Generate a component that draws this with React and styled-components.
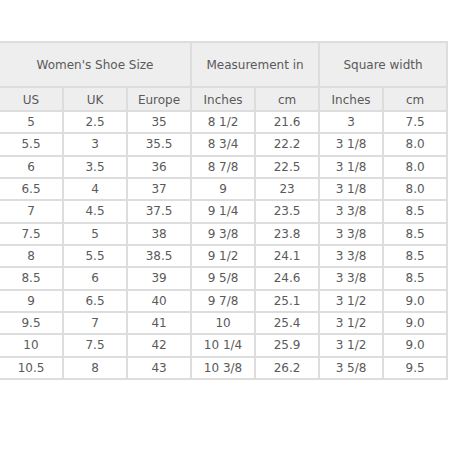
import React from "react";
import styled, { createGlobalStyle } from "styled-components";

const Global = createGlobalStyle`
  html, body { margin: 0; padding: 0; background: #fff; }
  body { font-family: "DejaVu Sans", Verdana, sans-serif; overflow: hidden; }
`;

const Page = styled.div`
  width: 449px;
  height: 450px;
  overflow: hidden;
  padding-top: 41px;
  box-sizing: border-box;
`;

const Table = styled.table`
  margin-left: -2px;
  width: 450px;
  table-layout: fixed;
  border-collapse: collapse;
  font-size: 12px;
  color: #5a5a5a;
`;

const Col = styled.col`
  width: 64px;
`;

const GroupHead = styled.th`
  background: #eee;
  border: 2px solid #ddd;
  font-weight: normal;
  height: 42px;
  padding: 1px 0 0;
  text-align: center;
`;

const SubHead = styled.th`
  background: #eee;
  border: 2px solid #ddd;
  font-weight: normal;
  height: 21px;
  padding: 1px 0 0;
  text-align: center;
`;

const Cell = styled.td`
  border: 2px solid #ddd;
  height: 20.33px;
  padding: 0;
  text-align: center;
  background: #fff;
`;

const rows = [
  ["5", "2.5", "35", "8 1/2", "21.6", "3", "7.5"],
  ["5.5", "3", "35.5", "8 3/4", "22.2", "3 1/8", "8.0"],
  ["6", "3.5", "36", "8 7/8", "22.5", "3 1/8", "8.0"],
  ["6.5", "4", "37", "9", "23", "3 1/8", "8.0"],
  ["7", "4.5", "37.5", "9 1/4", "23.5", "3 3/8", "8.5"],
  ["7.5", "5", "38", "9 3/8", "23.8", "3 3/8", "8.5"],
  ["8", "5.5", "38.5", "9 1/2", "24.1", "3 3/8", "8.5"],
  ["8.5", "6", "39", "9 5/8", "24.6", "3 3/8", "8.5"],
  ["9", "6.5", "40", "9 7/8", "25.1", "3 1/2", "9.0"],
  ["9.5", "7", "41", "10", "25.4", "3 1/2", "9.0"],
  ["10", "7.5", "42", "10 1/4", "25.9", "3 1/2", "9.0"],
  ["10.5", "8", "43", "10 3/8", "26.2", "3 5/8", "9.5"],
];

export default function App() {
  return (
    <Page>
      <Global />
      <Table>
        <colgroup>
          {Array.from({ length: 7 }).map((_, i) => (
            <Col key={i} />
          ))}
        </colgroup>
        <thead>
          <tr>
            <GroupHead colSpan={3}>Women's Shoe Size</GroupHead>
            <GroupHead colSpan={2}>Measurement in</GroupHead>
            <GroupHead colSpan={2}>Square width</GroupHead>
          </tr>
          <tr>
            {["US", "UK", "Europe", "Inches", "cm", "Inches", "cm"].map((h, i) => (
              <SubHead key={i}>{h}</SubHead>
            ))}
          </tr>
        </thead>
        <tbody>
          {rows.map((r, i) => (
            <tr key={i}>
              {r.map((c, j) => (
                <Cell key={j}>{c}</Cell>
              ))}
            </tr>
          ))}
        </tbody>
      </Table>
    </Page>
  );
}
